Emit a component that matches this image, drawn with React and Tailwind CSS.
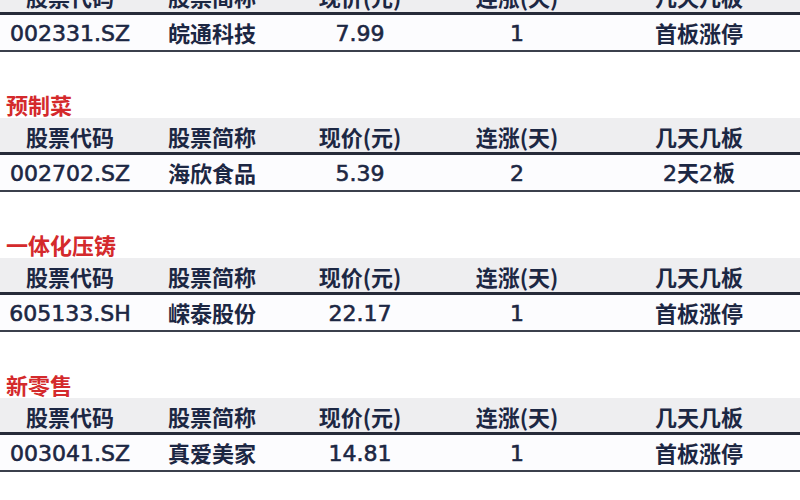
import React from "react";

const sections = [
  { title: "", row: ["002331.SZ", "皖通科技", "7.99", "1", "首板涨停"] },
  { title: "预制菜", row: ["002702.SZ", "海欣食品", "5.39", "2", "2天2板"] },
  { title: "一体化压铸", row: ["605133.SH", "嵘泰股份", "22.17", "1", "首板涨停"] },
  { title: "新零售", row: ["003041.SZ", "真爱美家", "14.81", "1", "首板涨停"] },
];

const headers = ["股票代码", "股票简称", "现价(元)", "连涨(天)", "几天几板"];

function splitRuns(text) {
  const runs = [];
  for (const ch of text) {
    const ascii = ch.charCodeAt(0) < 128;
    const last = runs[runs.length - 1];
    if (last && last.ascii === ascii) last.text += ch;
    else runs.push({ ascii, text: ch });
  }
  return runs;
}

function DataText({ text }) {
  return (
    <>
      {splitRuns(text).map((r, i) =>
        r.ascii ? (
          <span
            key={i}
            className="[font-family:'DejaVu_Sans',sans-serif] font-normal [-webkit-text-stroke:0.6px_#1c2743]"
          >
            {r.text}
          </span>
        ) : (
          <span key={i} className="[font-family:'Noto_Sans_CJK_SC',sans-serif] font-bold">
            {r.text}
          </span>
        )
      )}
    </>
  );
}

function Row({ cells, header }) {
  return (
    <div
      className={
        header
          ? "grid grid-cols-[140px_144px_152px_162px_1fr] h-[37px] pt-[2px] items-center bg-[#eeeef0] border-b-[3px] border-[#262b39]"
          : "grid grid-cols-[140px_144px_152px_162px_1fr] h-[37px] items-center bg-[#fcfcfe] border-b-[2px] border-[#3b404c]"
      }
    >
      {cells.map((c, i) => (
        <div
          key={i}
          className={
            header
              ? "text-center text-[22px] leading-[22px] font-bold text-[#1c2743] [font-family:'Noto_Sans_CJK_SC',sans-serif] whitespace-nowrap"
              : "text-center text-[22px] leading-[22px] text-[#1c2743] whitespace-nowrap"
          }
        >
          {header ? c : <DataText text={c} />}
        </div>
      ))}
    </div>
  );
}

export default function App() {
  return (
    <div className="w-[800px] h-[500px] overflow-hidden bg-white">
      <div className="mt-[-88px]">
        {sections.map((s, idx) => (
          <div key={idx} className="flex flex-col">
            <div className="h-[66px] pt-[41px] pl-[6px]">
              <span className="text-[22px] leading-[22px] font-bold text-[#d42a2c] [font-family:'Noto_Sans_CJK_SC',sans-serif]">
                {s.title}
              </span>
            </div>
            <Row cells={headers} header />
            <Row cells={s.row} />
          </div>
        ))}
      </div>
    </div>
  );
}
